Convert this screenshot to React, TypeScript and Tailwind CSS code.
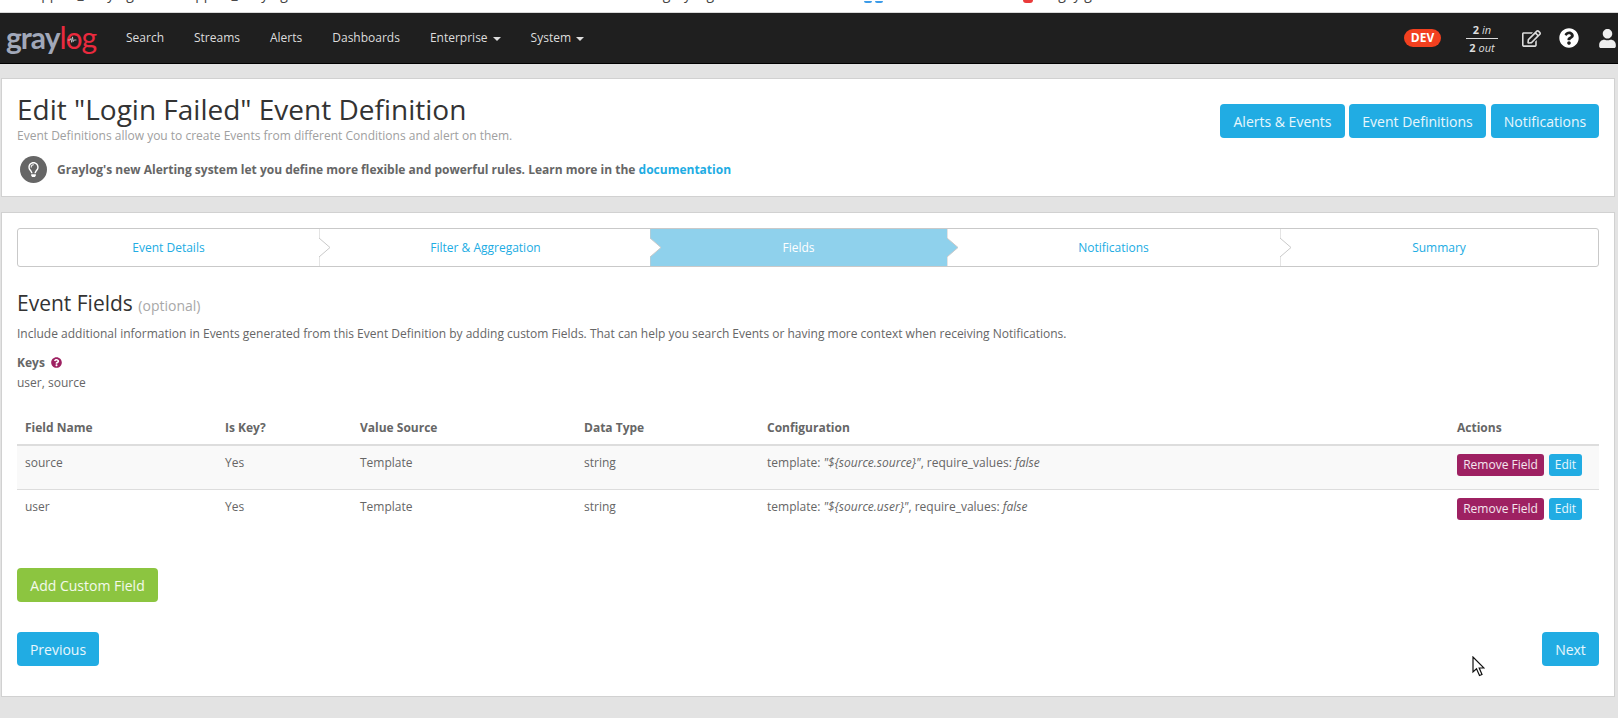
import React from 'react';
import { FaRegEdit, FaQuestionCircle, FaUser, FaRegLightbulb } from 'react-icons/fa';

const font = 'font-["Open_Sans",sans-serif]';

function Caret() {
  return <span className="inline-block ml-[5px] align-middle w-0 h-0 border-x-[4px] border-x-transparent border-t-[4px] border-t-[#ddd]" />;
}

function Logo() {
  return (
    <div className='ml-[6px] w-[91px] flex items-baseline font-["Lato",sans-serif] text-[30px] leading-none tracking-[-1px] mt-[-3px]'>
      <span className="font-bold text-[#a1a8b9]">gray</span>
      <span className="font-normal text-[#ea2a3e] relative">
        log
        <svg className="absolute left-[8px] top-[14px]" width="11" height="8" viewBox="0 0 14 10" fill="none" stroke="#cfd2da" strokeWidth="1">
          <path d="M1 5h3l1-2 1 5 1-7 1 6 1-2h3" />
        </svg>
      </span>
    </div>
  );
}

function NavBar() {
  const links = [
    { label: 'Search' },
    { label: 'Streams' },
    { label: 'Alerts' },
    { label: 'Dashboards' },
    { label: 'Enterprise', caret: true },
    { label: 'System', caret: true },
  ];
  return (
    <div className="h-[51px] shrink-0 bg-[#1f1f1f] border-b border-black flex items-center text-[#ddd] text-[12px]">
      <Logo />
      <div className="flex ml-[29px] gap-[30px]">
        {links.map((l) => (
          <span key={l.label} className="whitespace-nowrap">
            {l.label}
            {l.caret && <Caret />}
          </span>
        ))}
      </div>
      <div className="ml-auto flex items-center">
        <span className="w-[37px] h-[18px] rounded-full bg-[#f2401f] text-white text-[12px] font-bold flex items-center justify-center">DEV</span>
        <div className="ml-[25px] w-[32px] text-[11px] leading-[13px] text-[#ddd] text-center">
          <div className="border-b border-[#ddd] pb-[2px]"><b>2</b> <i>in</i></div>
          <div className="pt-[2px]"><b>2</b> <i>out</i></div>
        </div>
        <FaRegEdit className="ml-[24px] text-[#ddd]" size={19} />
        <FaQuestionCircle className="ml-[18px] text-white" size={20} />
        <FaUser className="ml-[19px] mr-[1px] text-[#eee]" size={19} />
      </div>
    </div>
  );
}

function Btn({ children, className }: { children: React.ReactNode; className: string }) {
  return (
    <button className={`h-[34px] rounded-[4px] bg-[#21ace3] text-white/90 text-[14px] ${className}`}>{children}</button>
  );
}

function Chevron({ active }: { active?: boolean }) {
  return (
    <svg className="absolute left-full top-0 z-10" width="12" height="37" viewBox="0 0 12 37">
      <path d="M0 0V9L11 18.5L0 28V37" fill={active ? '#8fd1ec' : '#fff'} stroke="#c9c9c9" strokeWidth="1" />
    </svg>
  );
}

function Stepper() {
  const steps = [
    { label: 'Event Details', w: 'w-[301px]' },
    { label: 'Filter & Aggregation', w: 'w-[331px] pl-[2px]' },
    { label: 'Fields', w: 'w-[297px]', active: true },
    { label: 'Notifications', w: 'w-[333px]' },
    { label: 'Summary', w: 'flex-1', last: true },
  ];
  return (
    <div className="h-[39px] flex border border-[#c9c9c9] rounded-[3px] text-[12px]">
      {steps.map((s) => (
        <div
          key={s.label}
          className={`relative ${s.w} flex items-center justify-center ${s.active ? 'bg-[#8fd1ec] text-white' : 'text-[#21ace3]'}`}
        >
          {s.label}
          {!s.last && <Chevron active={s.active} />}
        </div>
      ))}
    </div>
  );
}

const rows = [
  { name: 'source', tpl: '"${source.source}"', bg: 'bg-[#f9f9f9]' },
  { name: 'user', tpl: '"${source.user}"', bg: '' },
];

function FieldsTable() {
  return (
    <table className="mt-[20px] w-full table-fixed text-[12px] text-[#666]">
      <colgroup>
        <col className="w-[200px]" />
        <col className="w-[135px]" />
        <col className="w-[224px]" />
        <col className="w-[183px]" />
        <col className="w-[690px]" />
        <col />
      </colgroup>
      <thead>
        <tr className="h-[34px] border-b-2 border-[#dddddd] text-left">
          {['Field Name', 'Is Key?', 'Value Source', 'Data Type', 'Configuration', 'Actions'].map((h) => (
            <th key={h} className="px-[8px] font-bold">{h}</th>
          ))}
        </tr>
      </thead>
      <tbody>
        {rows.map((r, i) => (
          <tr key={r.name} className={`h-[44px] align-top ${r.bg} ${i === 0 ? 'border-b border-[#dddddd]' : ''}`}>
            <td className="px-[8px] pt-[8px]">{r.name}</td>
            <td className="px-[8px] pt-[8px]">Yes</td>
            <td className="px-[8px] pt-[8px]">Template</td>
            <td className="px-[8px] pt-[8px]">string</td>
            <td className="px-[8px] pt-[8px]">
              template: <i>{r.tpl}</i>, require_values: <i>false</i>
            </td>
            <td className="px-[8px] pt-[8px]">
              <div className="flex gap-[5px]">
                <button className="h-[22px] w-[87px] rounded-[3px] bg-[#9e2162] text-white/90 text-[12px]">Remove Field</button>
                <button className="h-[22px] w-[33px] rounded-[3px] bg-[#21ace3] text-white/90 text-[12px]">Edit</button>
              </div>
            </td>
          </tr>
        ))}
      </tbody>
    </table>
  );
}

export default function App() {
  return (
    <div className={`relative h-[718px] overflow-hidden flex flex-col bg-[#e3e3e3] ${font} text-[#666]`}>
      {/* bit of the page above, only descenders show */}
      <div className="h-[13px] shrink-0 bg-white border-b border-[#d8d8d8] overflow-hidden">
        <div className="flex items-end h-[3px] ml-[25px] text-[14px] leading-[18px] text-[#444] whitespace-nowrap">
          <span>Support_Graylog</span>
          <span className="ml-[45px]">Support_Graylog</span>
          <span className="ml-[375px]">gray log</span>
          <span className="ml-[150px] w-[8px] h-[2px] rounded-b-full bg-[#3b9be8]" />
          <span className="ml-[3px] w-[8px] h-[2px] rounded-b-full bg-[#3b9be8]" />
          <span className="ml-[140px] w-[10px] h-[3px] rounded-b-full bg-[#ea3a3a]" />
          <span className="ml-[25px]">gay g</span>
        </div>
      </div>
      <NavBar />

      <div className="mt-[14px] ml-px mr-[3px] h-[119px] shrink-0 bg-white border border-[#d1d1d1] px-[15px] flex justify-between">
        <div>
          <h1 className="mt-[13px] text-[28px] leading-[34px] text-[#333]">Edit "Login Failed" Event Definition</h1>
          <p className="mt-[3px] text-[12px] leading-[14px] text-[#a0a0a0]">Event Definitions allow you to create Events from different Conditions and alert on them.</p>
          <div className="mt-[13px] flex items-center">
            <span className="ml-[3px] w-[27px] h-[27px] rounded-full bg-[#666] flex items-center justify-center text-white">
              <FaRegLightbulb size={15} />
            </span>
            <span className="ml-[10px] text-[12px] font-bold text-[#666]">
              Graylog's new Alerting system let you define more flexible and powerful rules. Learn more in the{' '}
              <span className="text-[#21ace3]">documentation</span>
            </span>
          </div>
        </div>
        <div className="flex gap-[4px] mt-[25px]">
          <Btn className="w-[125px]">Alerts &amp; Events</Btn>
          <Btn className="w-[137px]">Event Definitions</Btn>
          <Btn className="w-[108px] ml-[1px]">Notifications</Btn>
        </div>
      </div>

      <div className="mt-[15px] ml-px mr-[3px] h-[485px] shrink-0 bg-white border border-[#d1d1d1] px-[15px] pt-[15px] flex flex-col">
        <Stepper />
        <h2 className="mt-[22px] text-[21px] leading-[28px] text-[#333]">
          Event Fields <span className="text-[14px] text-[#a8a8a8]">(optional)</span>
        </h2>
        <p className="mt-[5px] text-[12px] leading-[17px]">
          Include additional information in Events generated from this Event Definition by adding custom Fields. That can help you search Events or having more context when receiving Notifications.
        </p>
        <div className="mt-[12px] text-[12px] leading-[17px] font-bold flex items-center gap-[6px]">
          Keys <FaQuestionCircle className="text-[#9e2162]" size={11} />
        </div>
        <div className="mt-[3px] text-[12px] leading-[17px]">user, source</div>
        <FieldsTable />
        <button className="mt-[35px] w-[141px] h-[34px] rounded-[4px] bg-[#8cc540] text-white/90 text-[14px]">Add Custom Field</button>
        <div className="mt-[30px] flex justify-between">
          <Btn className="w-[82px]">Previous</Btn>
          <Btn className="w-[57px]">Next</Btn>
        </div>
      </div>

      {/* mouse pointer caught in the screenshot */}
      <svg className="absolute left-[1472px] top-[656px]" width="13" height="21" viewBox="0 0 13 21">
        <path d="M1 1V16L4.5 12.8L7.5 19.5L10 18.5L7.2 12H12L1 1Z" fill="#fff" stroke="#111" strokeWidth="1.2" />
      </svg>
    </div>
  );
}
